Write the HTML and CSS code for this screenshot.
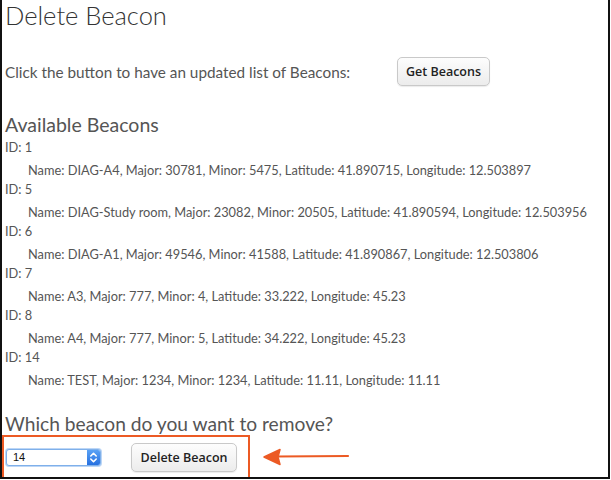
FILE: index.html
```html
<!DOCTYPE html>
<html>
<head>
<meta charset="utf-8">
<link rel="stylesheet" href="styles.css">
</head>
<body>
<div class="frame">
  <h1 class="title">Delete Beacon</h1>
  <div class="intro">
    <p class="intro-text">Click the button to have an updated list of Beacons:</p>
    <button class="btn btn-get">Get Beacons</button>
  </div>
  <h2 class="subtitle">Available Beacons</h2>
  <div class="list">
    <div class="id">ID: 1</div>
    <div class="name">Name: DIAG-A4, Major: 30781, Minor: 5475, Latitude: 41.890715, Longitude: 12.503897</div>
    <div class="id">ID: 5</div>
    <div class="name">Name: DIAG-Study room, Major: 23082, Minor: 20505, Latitude: 41.890594, Longitude: 12.503956</div>
    <div class="id">ID: 6</div>
    <div class="name">Name: DIAG-A1, Major: 49546, Minor: 41588, Latitude: 41.890867, Longitude: 12.503806</div>
    <div class="id">ID: 7</div>
    <div class="name">Name: A3, Major: 777, Minor: 4, Latitude: 33.222, Longitude: 45.23</div>
    <div class="id">ID: 8</div>
    <div class="name">Name: A4, Major: 777, Minor: 5, Latitude: 34.222, Longitude: 45.23</div>
    <div class="id">ID: 14</div>
    <div class="name">Name: TEST, Major: 1234, Minor: 1234, Latitude: 11.11, Longitude: 11.11</div>
  </div>
  <h2 class="subtitle question">Which beacon do you want to remove?</h2>
  <div class="form-row">
    <div class="highlight">
      <div class="select">
        <span class="select-value">14</span>
        <span class="stepper">
          <svg width="13" height="15" viewBox="0 0 13 15">
            <path d="M3.8 6 L6.5 3.3 L9.2 6" fill="none" stroke="#fff" stroke-width="1.6" stroke-linecap="round" stroke-linejoin="round"/>
            <path d="M3.8 9 L6.5 11.7 L9.2 9" fill="none" stroke="#fff" stroke-width="1.6" stroke-linecap="round" stroke-linejoin="round"/>
          </svg>
        </span>
      </div>
      <button class="btn btn-delete">Delete Beacon</button>
    </div>
    <svg class="arrow" width="90" height="20" viewBox="0 0 90 20">
      <path d="M14 9.5 L85 9" stroke="#ec5a24" stroke-width="2.2" fill="none" stroke-linecap="round"/>
      <path d="M1 10 L17 2.5 L15 10 L17 17.5 Z" fill="#ec5a24" stroke="#ec5a24" stroke-width="1.5" stroke-linejoin="round"/>
    </svg>
  </div>
</div>
</body>
</html>
```

FILE: styles.css
```css
html, body {
  margin: 0;
  padding: 0;
  background: #fff;
}
.frame {
  box-sizing: border-box;
  width: 610px;
  height: 479px;
  border-left: 2px solid #111;
  border-right: 2px solid #111;
  border-bottom: 2px solid #111;
  padding: 0 0 0 3px;
  font-family: Lato, "Open Sans", sans-serif;
  color: #555;
  overflow: hidden;
}
.title {
  margin: 0;
  font-size: 25.5px;
  line-height: 30px;
  font-weight: 300;
  color: #333;
}
.intro {
  display: flex;
  align-items: center;
  margin-top: 27px;
}
.intro-text {
  margin: 0;
  font-size: 15.3px;
  line-height: 20px;
  width: 392px;
  color: #555;
}
.btn {
  font-family: "Open Sans", "DejaVu Sans", sans-serif;
  font-weight: 600;
  font-size: 12.5px;
  color: #222;
  background: linear-gradient(#fdfdfd, #ececec);
  border: 1px solid #c9c9c9;
  border-radius: 5px;
  box-shadow: 0 1px 1px rgba(0,0,0,0.08);
  padding: 0;
}
.btn-get {
  width: 93px;
  height: 29px;
}
.subtitle {
  margin: 27px 0 0 0;
  font-size: 19.5px;
  line-height: 24px;
  font-weight: 400;
  color: #555;
}
.list {
  font-size: 12.8px;
  color: #555;
}
.id {
  line-height: 20px;
}
.name {
  line-height: 20px;
  padding-left: 23px;
  margin-top: 3px;
  margin-bottom: -1px;
}
.question {
  margin-top: 23px;
  font-size: 19.2px;
}
.form-row {
  display: flex;
  align-items: center;
  margin-top: -1px;
  margin-left: -3px;
}
.highlight {
  display: flex;
  align-items: center;
  box-sizing: border-box;
  width: 248px;
  height: 44px;
  border: 2.5px solid #ec5a24;
  padding-left: 2px;
}
.select {
  display: flex;
  align-items: stretch;
  box-sizing: border-box;
  width: 95px;
  height: 17px;
  border: 1px solid #7fb0ea;
  border-radius: 3px;
  background: #fff;
  box-shadow: 0 0 0 1px #bcd6f6;
  overflow: hidden;
}
.select-value {
  flex: 1;
  font-family: "Liberation Sans", Arial, sans-serif;
  font-size: 11px;
  line-height: 15px;
  color: #111;
  padding-left: 6px;
}
.stepper {
  width: 13px;
  background: linear-gradient(#5aa2f5, #2670e0);
  display: flex;
  align-items: center;
  justify-content: center;
}
.stepper svg {
  display: block;
}
.btn-delete {
  margin-left: 30px;
  width: 106px;
  height: 29px;
}
.arrow {
  margin-left: 13px;
}
```
